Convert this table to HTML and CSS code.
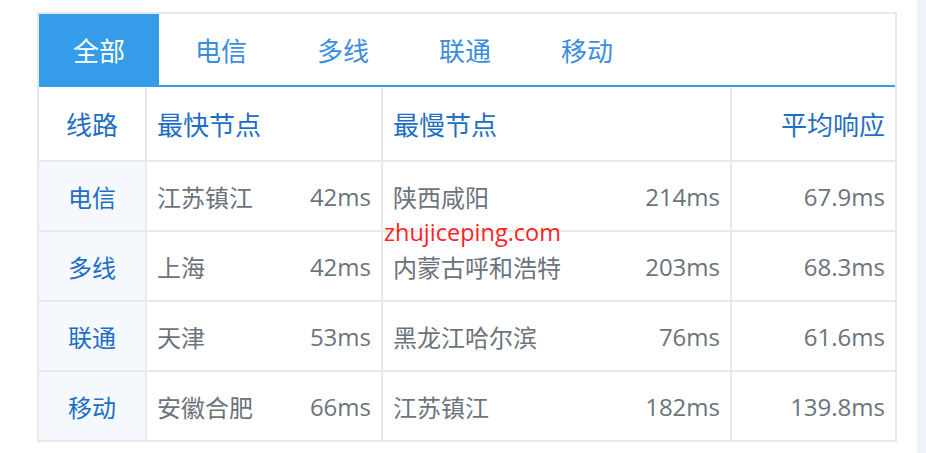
FILE: index.html
```html
<!DOCTYPE html>
<html lang="zh-CN">
<head>
<meta charset="utf-8">
<title>线路响应</title>
<link rel="stylesheet" href="styles.css">
</head>
<body>
<div class="page">
  <main class="main">
    <div class="panel">
      <div class="tabs">
        <div class="tab active">全部</div>
        <div class="tab">电信</div>
        <div class="tab">多线</div>
        <div class="tab">联通</div>
        <div class="tab">移动</div>
      </div>
      <div class="grid">
        <div class="cell head center">线路</div>
        <div class="cell head">最快节点</div>
        <div class="cell head">最慢节点</div>
        <div class="cell head right">平均响应</div>

        <div class="cell line">电信</div>
        <div class="cell split"><span>江苏镇江</span><span>42ms</span></div>
        <div class="cell split"><span>陕西咸阳</span><span>214ms</span></div>
        <div class="cell right">67.9ms</div>

        <div class="cell line">多线</div>
        <div class="cell split"><span>上海</span><span>42ms</span></div>
        <div class="cell split"><span>内蒙古呼和浩特</span><span>203ms</span></div>
        <div class="cell right">68.3ms</div>

        <div class="cell line">联通</div>
        <div class="cell split"><span>天津</span><span>53ms</span></div>
        <div class="cell split"><span>黑龙江哈尔滨</span><span>76ms</span></div>
        <div class="cell right">61.6ms</div>

        <div class="cell line">移动</div>
        <div class="cell split"><span>安徽合肥</span><span>66ms</span></div>
        <div class="cell split"><span>江苏镇江</span><span>182ms</span></div>
        <div class="cell right">139.8ms</div>
      </div>
      <div class="watermark">zhujiceping.com</div>
    </div>
  </main>
  <aside class="strip"></aside>
</div>
</body>
</html>
```

FILE: styles.css
```css
html, body {
  margin: 0;
  padding: 0;
  background: #ffffff;
}

body {
  font-family: "Open Sans", "Noto Sans CJK SC", sans-serif;
}

.page {
  display: flex;
  height: 453px;
  overflow: hidden;
}

.main {
  flex: 1;
  padding: 12px 0 0 37px;
}

.strip {
  width: 9px;
  background: #eef3f8;
}

.panel {
  position: relative;
  width: 856px;
  border: 2px solid #e8e8e8;
  background: #ffffff;
}

.tabs {
  display: flex;
  gap: 2px;
  height: 71px;
  border-bottom: 2px solid #369de8;
}

.tab {
  width: 120px;
  display: flex;
  align-items: center;
  justify-content: center;
  font-size: 26px;
  color: #3a8de0;
}

.tab.active {
  background: #349ce8;
  color: #ffffff;
}

.grid {
  margin-top: 1px;
  display: grid;
  grid-template-columns: 106px 234px 347px 163px;
  grid-template-rows: 72px repeat(4, 68px);
  gap: 2px;
  background: #e8e8e8;
}

.cell {
  background: #ffffff;
  display: flex;
  align-items: center;
  padding: 0 10px 0 10px;
  font-size: 24px;
  color: #6b737d;
}

.cell.head {
  font-size: 26px;
  color: #1e6fc4;
}

.cell.center {
  justify-content: center;
  padding: 0;
}

.cell.right {
  justify-content: flex-end;
}

.cell.line {
  justify-content: center;
  padding: 0;
  background: #f5f9fd;
  color: #1e6fc4;
}

.cell.split {
  justify-content: space-between;
}

.watermark {
  position: absolute;
  left: 345px;
  top: 202px;
  font-family: "Open Sans", sans-serif;
  font-size: 23.5px;
  line-height: 32px;
  color: #ff1f1f;
}
```
